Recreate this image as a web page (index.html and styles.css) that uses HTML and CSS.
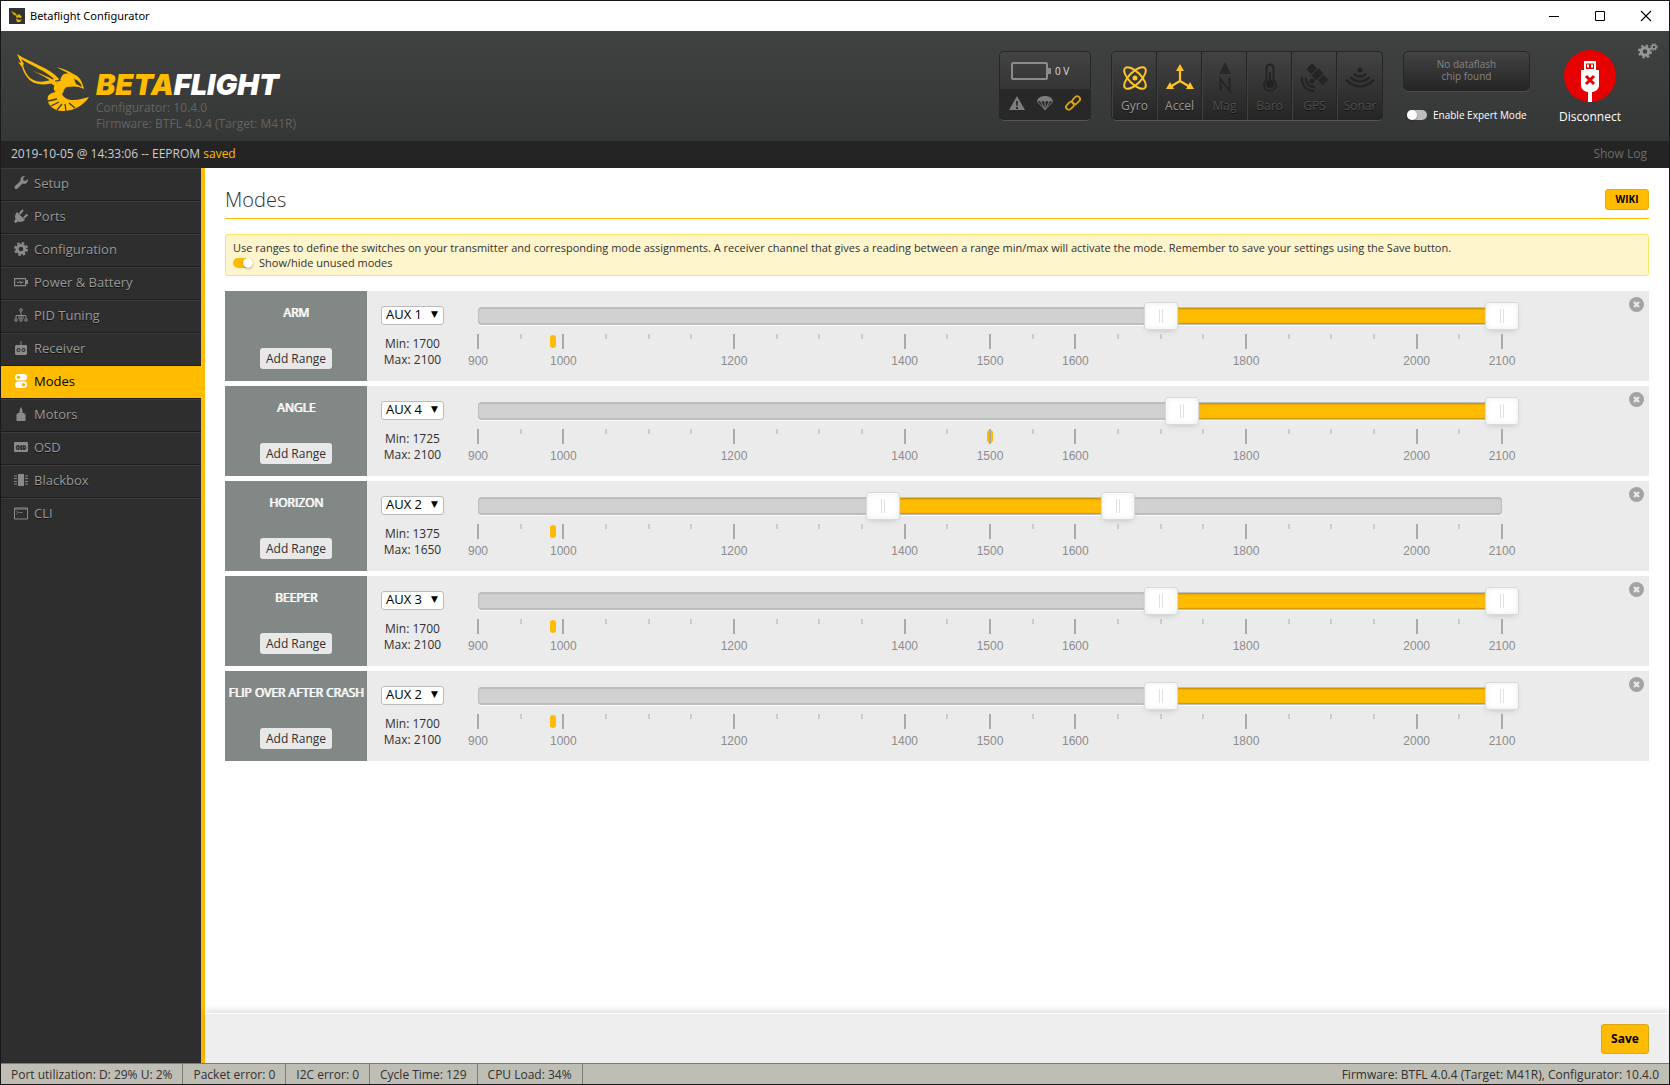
FILE: index.html
```html
<!DOCTYPE html>
<html lang="en">
<head>
<meta charset="utf-8">
<title>Betaflight Configurator</title>
<link rel="stylesheet" href="styles.css">
</head>
<body>
<div class="titlebar">
  <svg class="app-icon" viewBox="0 0 16 16"><rect width="16" height="16" fill="#333"/><path d="M2 3l3 4 4 1-3-3zM7 8l3-2 3 3-2 1-2-1-1 2zM7 11l4 1 2-1-2 3H8z" fill="#e8b410"/></svg>
  <span class="titlebar-name">Betaflight Configurator</span>
  <button class="win-btn" aria-label="Minimize"><svg viewBox="0 0 10 10"><path d="M0 5.500h10" stroke="#000"/></svg></button>
  <button class="win-btn" aria-label="Maximize"><svg viewBox="0 0 10 10"><path d="M.5.5h9v9h-9z" fill="none" stroke="#000"/></svg></button>
  <button class="win-btn" aria-label="Close"><svg viewBox="0 0 10 10"><path d="M0 0l10 10M10 0L0 10" stroke="#000" stroke-width="1.100"/></svg></button>
</div>

<header class="header">
  <div class="logo">
    <svg class="wasp" viewBox="0 0 72 58">
      <path fill-rule="evenodd" d="M0 0C12 8 33 14 42 25L38 32 34 29.500C22 32 14 29 10 23 7 19 6 16 5 13L1 8l3 1zM4 5l3 5-1 1C8 19 12 25 19 27c5 1.500 11 0 15-1l3-1C29 17 15 12 4 5z" fill="#ffbb00"/>
      <path d="M15 16c7 4 16 6 21 10l-2 1.500C28 22 21 20 15 16zM40 13c6 2 13 4 17 8l-5-1c-4-3-8-4-12-7z" fill="#ffbb00"/>
      <path d="M47 20c8-2 13 1 16 5 2 3 3 6 4 10-5-3-11-3-17-2-3 1-3 5-6 5-4 1-6 0-7-2-1-4 2-7 5-9 2-2 2-5 5-7z" fill="#ffbb00"/>
      <path d="M57 25c4 1 7 4 8 8l-6-3z" fill="#3b3d3c"/>
      <path d="M38 27l6-1" stroke="#3b3d3c"/>
      <path d="M31 42c3-4 10-5 16-5l-2 3c2 4 6 6 11 6 6 0 11-2 16-3C67 51 57 57 46 57 37 57 29 51 31 42z" fill="#ffbb00"/>
      <path d="M31 47l9-2M34 52l8-4M40 56l5-6M49 57l-1-7M58 54l-6-5" stroke="#393b3a" stroke-width="1.300"/>
    </svg>
    <div class="logo-text">
      <div class="brand"><span class="brand-beta">BETA</span>FLIGHT</div>
      <div class="version">Configurator: 10.4.0</div>
      <div class="version">Firmware: BTFL 4.0.4 (Target: M41R)</div>
    </div>
  </div>

  <div class="battery-box">
    <div class="battery-top"><span class="battery"></span><span>0 V</span></div>
    <div class="battery-bottom">
      <svg viewBox="0 0 16 16" fill="#7d7d7d"><path fill-rule="evenodd" d="M8 1l8 14H0zM7 6l.4 5h1.200L9 6zM7 12v2h2v-2z"/></svg>
      <svg viewBox="0 0 16 16" fill="#7d7d7d"><path d="M0 7c0-8 16-8 16 0l-2-1-2 1-2-1-2 1-2-1-2 1-2-1z"/><path d="M.5 7L8 14.500 15.500 7M4 7l4 8 4-8M8 7v7" fill="none" stroke="#7d7d7d"/></svg>
      <svg viewBox="0 0 16 16" fill="none" stroke="#d9a310" stroke-width="1.800"><rect x="6.500" y="2.500" width="9" height="5.600" rx="2.800" transform="rotate(-45 11 5.300)"/><rect x=".5" y="8" width="9" height="5.600" rx="2.800" transform="rotate(-45 5 10.800)"/></svg>
    </div>
  </div>

  <ul class="sensors">
    <li class="sensor on"><svg viewBox="0 0 28 28" fill="none" stroke="#ffc425" stroke-width="2"><ellipse cx="14" cy="14" rx="14" ry="6" transform="rotate(45 14 14)"/><ellipse cx="14" cy="14" rx="14" ry="6" transform="rotate(-45 14 14)"/><circle cx="14" cy="14" r="1.500" fill="#ffc425"/></svg>Gyro</li>
    <li class="sensor on"><svg viewBox="0 0 28 28"><path d="M14 5v12L4 23M14 17l10 6" fill="none" stroke="#ffc425" stroke-width="2.200"/><path d="M14 0l4 7h-8zM0 25l4-7 4 7zM28 25l-8 0 4-7z" fill="#ffc425"/></svg>Accel</li>
    <li class="sensor"><svg viewBox="0 0 28 28"><path d="M14-2l6 12H8z" fill="#282828"/><path d="M9.500 27V15L18.500 27V14" fill="none" stroke="#242424" stroke-width="2"/></svg>Mag</li>
    <li class="sensor"><svg viewBox="0 0 28 28"><path d="M10.500 16V4a3.500 3.500 0 0 1 7 0v12a6 6 0 1 1-7 0z" fill="none" stroke="#242424" stroke-width="2"/><circle cx="14" cy="20" r="4" fill="#222"/><path d="M14 8v10" stroke="#222" stroke-width="2"/></svg>Baro</li>
    <li class="sensor"><svg viewBox="0 0 28 28"><g transform="rotate(45 16 10)" fill="#242424"><rect x="5" y="6" width="7" height="8"/><rect x="13" y="5" width="7" height="10"/><rect x="21" y="6" width="7" height="8"/></g><path d="M5 14a8 8 0 0 0 9 9M1 13a12 12 0 0 0 12 14" fill="none" stroke="#222" stroke-width="2"/><circle cx="11" cy="17" r="2.500" fill="#222"/></svg>GPS</li>
    <li class="sensor"><svg viewBox="0 0 28 28"><circle cx="14" cy="6" r="2.500" fill="#242424"/><path d="M8 10q6 5 12 0M4 13q10 9 20 0M0 16q14 13 28 0" fill="none" stroke="#242424" stroke-width="2.400"/></svg>Sonar</li>
  </ul>

  <div class="flash-col">
    <div class="dataflash">No dataflash<br>chip found</div>
    <label class="expert"><input class="switch" type="checkbox">Enable Expert Mode</label>
  </div>

  <button class="connect">
    <svg viewBox="0 0 52 52"><circle cx="26" cy="26" r="26" fill="#e60000"/><path d="M20 11h12v9h3v15c0 4-3 6-6 7h-1v10h-4V42h-1c-3-1-6-3-6-7V20h3z" fill="#fff"/><path d="M22 13.500h8V19h-8z" fill="#e60000"/><path d="M23 14.500h2v3h-2zM27 14.500h2v3h-2z" fill="#fff"/><path d="M22 26l8 8M30 26l-8 8" stroke="#e60000" stroke-width="3"/></svg>
    Disconnect
  </button>
  <button class="options" aria-label="Options"><svg viewBox="0 0 20 16" fill="none" stroke="#979797"><circle cx="7" cy="8.500" r="3.800" stroke-width="3"/><circle cx="7" cy="8.500" r="6" stroke-width="2" stroke-dasharray="2.400 2.312"/><circle cx="16" cy="4" r="2" stroke-width="1.500"/><circle cx="16" cy="4" r="3.200" stroke-width="1.200" stroke-dasharray="1.300 1.213"/></svg></button>
</header>

<div class="log"><span>2019-10-05 @ 14:33:06 -- EEPROM <span class="saved">saved</span></span><a class="show-log" href="#">Show Log</a></div>

<div class="main">
  <nav class="sidebar">
    <a href="#"><svg viewBox="0 0 14 14"><path d="M14 3a4 4 0 0 1-5.500 4.500L3 13a2 2 0 0 1-2.500-2.500L6.500 5A4 4 0 0 1 11 0L9 2.500 9.500 4.500 11.500 5z"/></svg>Setup</a>
    <a href="#"><svg viewBox="0 0 14 14"><path d="M3 3l8 8c-2 2-5 2.500-7 1.500L1.500 14 0 12.500 1.500 10C.5 8 1 5 3 3z"/><path d="M5.500 5l3.500-4M9.500 9l4-3.500" stroke="#8a8a8a" stroke-width="2" fill="none"/></svg>Ports</a>
    <a href="#"><svg viewBox="0 0 14 14" fill="none" stroke="#8a8a8a"><circle cx="7" cy="7" r="3.800" stroke-width="3" fill="none"/><circle cx="7" cy="7" r="6" fill="none" stroke-width="2" stroke-dasharray="2.600 2.112"/></svg>Configuration</a>
    <a href="#"><svg viewBox="0 0 14 14"><path d="M.6 3.600h11v7h-11z" fill="none" stroke="#8a8a8a" stroke-width="1.200"/><path d="M12 5h2v4h-2z"/><path d="M3 7.500h2l1-1.500 1 2.500 1-1.500h1.500" fill="none" stroke="#8a8a8a"/></svg>Power &amp; Battery</a>
    <a href="#"><svg viewBox="0 0 14 14" stroke="#8a8a8a"><path d="M7 3v8M2 11V7.500h10V11M5 7.500v3.500M9 7.500V11" fill="none"/><circle cx="7" cy="2" r="1.300" fill="none"/><circle cx="2" cy="12" r="1.300" fill="none"/><circle cx="7" cy="12" r="1.300" fill="none"/><circle cx="12" cy="12" r="1.300" fill="none"/></svg>PID Tuning</a>
    <a href="#"><svg viewBox="0 0 14 14"><path fill-rule="evenodd" d="M6.500 0h1v4H12l1 1v8l-1 1H2l-1-1V5l1-1h4.500zM4.500 7a2 2 0 1 0 .01 0zM9.500 7a2 2 0 1 0 .01 0z"/><circle cx="4.500" cy="9" r="1"/><circle cx="9.500" cy="9" r="1"/></svg>Receiver</a>
    <a href="#" class="active" aria-current="page"><svg viewBox="0 0 14 14"><rect x="1" y="0" width="12" height="6.500" rx="3"/><rect x="1" y="7.500" width="12" height="6.500" rx="3"/><circle cx="4.500" cy="3.200" r="1.800" fill="#ffbb00"/><circle cx="9.500" cy="10.800" r="1.800" fill="#ffbb00"/></svg>Modes</a>
    <a href="#"><svg viewBox="0 0 14 14"><path d="M7 0l1.500 3v3H10l1.500 1.500V14h-9V7.500L4 6h1.500V3z"/></svg>Motors</a>
    <a href="#"><svg viewBox="0 0 14 14"><rect y="2" width="14" height="10" rx="1"/><text class="osd-text" x="7" y="9" text-anchor="middle">OSD</text></svg>OSD</a>
    <a href="#"><svg viewBox="0 0 14 14"><path d="M4 1h6v12H4z"/><path d="M0 3h3M0 5.500h3M0 8.500h3M0 11h3M11 3h3M11 5.500h3M11 8.500h3M11 11h3" stroke="#8a8a8a"/></svg>Blackbox</a>
    <a href="#"><svg viewBox="0 0 14 14"><path d="M.5 2h13v11H.5zM0 3h14" fill="none" stroke="#8a8a8a"/><path d="M2.500 5l2 1.500-2 1.500M5.500 6.500h3" fill="none" stroke="#8a8a8a" stroke-width=".8"/></svg>CLI</a>
  </nav>

  <main class="content">
    <div class="tab">
      <div class="tab-head"><h1>Modes</h1><a class="wiki" href="#">WIKI</a></div>
      <div class="note">
        <p>Use ranges to define the switches on your transmitter and corresponding mode assignments. A receiver channel that gives a reading between a range min/max will activate the mode. Remember to save your settings using the Save button.</p>
        <label class="unused"><input class="switch" type="checkbox" checked>Show/hide unused modes</label>
      </div>
      <div class="modes" id="modes"></div>
    </div>
    <div class="toolbar"><button class="save">Save</button></div>
  </main>
</div>

<footer class="status">
  <span>Port utilization: D: 29% U: 2%</span><span>Packet error: 0</span><span>I2C error: 0</span><span>Cycle Time: 129</span><span>CPU Load: 34%</span>
  <div class="status-right">Firmware: BTFL 4.0.4 (Target: M41R), Configurator: 10.4.0</div>
</footer>
<script src="modes.js"></script>
</body>
</html>
```
FILE: styles.css
```css
* { box-sizing: border-box; }
body {
  margin: 0;
  min-height: 100vh;
  display: flex;
  flex-direction: column;
  border: 1px solid #1b181c;
  font-family: "Open Sans", "Noto Sans", sans-serif;
  font-size: 12px;
  line-height: 16px;
  color: #303030;
  background: #fff;
}
button, select, input { font: inherit; margin: 0; }
button { border: 0; padding: 0; background: none; cursor: pointer; }
a { text-decoration: none; color: inherit; }
svg { display: block; overflow: visible; }

.titlebar { height: 30px; display: flex; align-items: center; padding-left: 8px; color: #000; }
.app-icon { width: 16px; height: 16px; margin-right: 5px; }
.titlebar-name { flex: 1; font-family: "Noto Sans", sans-serif; font-size: 11px; }
.win-btn { width: 46px; height: 28px; display: grid; place-items: center; }
.win-btn svg { width: 10px; height: 10px; }

.header {
  position: relative;
  height: 110px;
  display: flex;
  align-items: flex-start;
  padding: 20px 43px 0 16px;
  background: linear-gradient(#3f4241, #353736);
}
.logo { flex: 1; display: flex; gap: 7px; padding-top: 3px; }
.wasp { width: 72px; height: 58px; }
.logo-text { padding-top: 16px; }
.brand { font: italic 900 29px/30px "Inter", sans-serif; color: #fff; }
.brand-beta { color: #ffbb00; }
.version { font-size: 12px; line-height: 16px; color: #636363; }

.battery-box { width: 92px; height: 70px; margin-right: 20px; border: 1px solid #272727; border-bottom-color: #555; border-radius: 5px; background: #282828; overflow: hidden; }
.battery-top { height: 37px; display: flex; align-items: center; gap: 7px; padding: 1px 0 0 11px; background: linear-gradient(#434343, #353535); color: #ddd; font-size: 10px; }
.battery { position: relative; width: 37px; height: 18px; border: 2px solid #8c8c8c; border-radius: 2px; }
.battery::after { content: ""; position: absolute; right: -5px; top: 4px; width: 3px; height: 6px; background: #8c8c8c; }
.battery-bottom { display: flex; gap: 12px; padding: 6px 9px; }
.battery-bottom svg { width: 16px; height: 16px; }

.sensors { list-style: none; margin: 0 20px 0 0; padding: 0; display: flex; height: 70px; border: 1px solid #272727; border-bottom-color: #555; border-radius: 5px; overflow: hidden; background: linear-gradient(#434343, #252525); }
.sensor { width: 45px; display: flex; flex-direction: column; align-items: center; gap: 6px; padding-top: 12px; border-right: 1px solid #242424; border-left: 1px solid #414141; color: #4f4f4f; text-shadow: 0 1px #111; }
.sensor:last-child { border-right: 0; }
.sensor svg { width: 28px; height: 28px; }
.sensor.on { color: #999; }

.flash-col { width: 127px; margin-right: 24px; }
.dataflash { height: 40px; padding-top: 6px; border: 1px solid #272727; border-radius: 5px; background: linear-gradient(#434343, #252525); color: #858585; text-align: center; font-size: 10px; line-height: 12px; box-shadow: 0 1px #4a4a4a; }
.expert { display: flex; align-items: center; gap: 6px; margin-top: 16px; padding-left: 4px; color: #fff; font-size: 10px; white-space: nowrap; }
.switch { appearance: none; position: relative; width: 20px; height: 10px; border-radius: 5px; background: #bdbdbd; }
.switch::before { content: ""; position: absolute; left: 0; top: 0; width: 10px; height: 10px; border-radius: 50%; background: #fff; box-shadow: 0 1px 2px rgba(0, 0, 0, .3); }
.switch:checked { background: #ffbb00; }
.switch:checked::before { left: 10px; }
.connect { display: flex; flex-direction: column; align-items: center; gap: 7px; margin-top: -1px; color: #fff; font-size: 12px; line-height: 16px; width: 72px; }
.connect svg { width: 52px; height: 52px; }
.options { position: absolute; right: 11px; top: 12px; }
.options svg { width: 20px; height: 16px; }

.log { height: 27px; display: flex; justify-content: space-between; align-items: center; padding: 0 22px 2px 10px; background: #242424; color: #ccc; }
.saved { color: #ffbb00; }
.show-log { color: #6c6c6c; }

.main { flex: 1; display: flex; }
.sidebar { width: 204px; border-right: 4px solid #ffbb00; background: #2e2e2e; }
.sidebar a { display: flex; align-items: center; gap: 6px; height: 33px; padding-left: 13px; padding-bottom: 4px; border-top: 1px solid #3d3d3d; border-bottom: 1px solid #1c1c1c; color: #999; font-size: 13px; text-shadow: 0 1px #111; }
.sidebar a:last-child { height: 32px; border-bottom: 0; }
.sidebar svg { width: 14px; height: 14px; fill: #8a8a8a; }
.sidebar .active { background: #ffbb00; border-top-color: #ffbb00; color: #000; text-shadow: none; }
.sidebar .active svg { fill: #fff; }
.osd-text { font: bold 5px "Open Sans", sans-serif; fill: #2e2e2e; }

.content { flex: 1; min-width: 0; display: flex; flex-direction: column; }
.tab { flex: 1; padding: 20px 20px 0; }
.tab-head { display: flex; justify-content: space-between; align-items: flex-start; height: 31px; border-bottom: 1px solid #ffbb00; }
h1 { margin: 0; font-size: 20px; line-height: 24px; font-weight: 300; color: #303030; }
.wiki { margin-top: 1px; width: 44px; height: 21px; border-radius: 3px; background: #ffbb00; border: 1px solid #e8ac08; color: #000; font-size: 10px; font-weight: 700; line-height: 19px; text-align: center; }
.note { margin: 15px 0; padding: 5px 7px; height: 42px; border: 1px solid #ffe55f; border-radius: 3px; background: #fff5cc; font-size: 11px; line-height: 15px; }
.note p { margin: 0; }
.unused { display: flex; align-items: center; gap: 6px; }

.modes { display: flex; flex-direction: column; gap: 5px; }
.mode { display: flex; height: 90px; background: #ebebeb; }
.mode-side { width: 142px; display: flex; flex-direction: column; align-items: center; justify-content: space-between; padding: 14px 0 12px; background: #828885; }
.mode-name { color: #fff; font-size: 12px; line-height: 16px; white-space: nowrap; text-shadow: 1px 0 #fff; }
.add-range { width: 72px; height: 21px; border-radius: 3px; background: #e8e8e8; color: #303030; }
.channel { width: 111px; padding: 15px 0 0 14px; }
.select { position: relative; display: block; width: 63px; height: 19px; margin-bottom: 11px; }
.select::after { content: "▼"; position: absolute; right: 6px; top: 0; font: 9px/17px "DejaVu Sans", sans-serif; color: #000; pointer-events: none; }
.select select { appearance: none; display: block; width: 100%; height: 100%; padding: 0 0 2px 4px; border: 1px solid #bbb; border-radius: 3px; background: #fff; color: #000; font-size: 13px; line-height: 15px; }
.limits { width: 63px; text-align: center; white-space: nowrap; }

.slider { position: relative; flex: 1; margin: 16px 0 0; }
.track { height: 18px; border: 1px solid #bfbfbf; border-radius: 3px; background: #d1d1d1; box-shadow: inset 0 1px 1px #bbb, inset 0 -1px #bbb, 0 1px #fafafa; }
.fill { position: absolute; top: 1px; height: 16px; background: #ffbb00; box-shadow: inset 0 1px 2px #b98800, inset 0 -1px 1px #d09900; }
.slider input { appearance: none; position: absolute; left: -17px; top: -5px; width: calc(100% + 34px); height: 28px; background: none; pointer-events: none; }
.slider input::-webkit-slider-thumb { appearance: none; width: 34px; height: 28px; border: 1px solid #d9d9d9; border-radius: 3px; background: linear-gradient(#e1e1e1, #e1e1e1) 14px 6px / 1px 14px no-repeat, linear-gradient(#e1e1e1, #e1e1e1) 17px 6px / 1px 14px no-repeat, #fff; box-shadow: inset 0 0 6px #ededed, 0 3px 6px -3px #bbb; pointer-events: auto; }
.pip { position: absolute; top: 27px; width: 2px; height: 5px; margin-left: -1px; background: #ccc; }
.pip.large { height: 15px; background: #aaa; }
.pip-label { position: absolute; top: 46px; width: 40px; margin-left: -20px; text-align: center; font-family: "Liberation Sans", Arial, sans-serif; color: #8c8c8c; }
.marker { position: absolute; top: 28px; width: 6px; height: 13px; margin-left: -3px; border-radius: 3px; background: #ffbb00; }
.row-end { width: 147px; display: flex; justify-content: flex-end; align-items: flex-start; padding: 6px 5px 0 0; }
.row-end svg { width: 15px; height: 15px; }

.toolbar { display: flex; justify-content: flex-end; height: 50px; padding: 10px 20px 0; border-top: 1px solid #fff; background: #eee; box-shadow: 0 -3px 6px rgba(0, 0, 0, .12); }
.save { width: 48px; height: 30px; border: 1px solid #dba718; border-radius: 3px; background: #ffbb00; color: #000; font-weight: 700; font-size: 12px; }

.status { display: flex; height: 21px; border-top: 1px solid #7d7b76; background: #bfbeb5; line-height: 21px; white-space: nowrap; }
.status span { padding: 0 10px; border-right: 1px solid #7d7b76; }
.status-right { margin-left: auto; padding-right: 10px; }
```
FILE: modes.js
```js
const MIN = 900;
const MAX = 2100;
const LABELLED = [900, 1000, 1200, 1400, 1500, 1600, 1800, 2000, 2100];
const modes = [
  { name: "ARM", aux: 1, low: 1700, high: 2100, value: 988 },
  { name: "ANGLE", aux: 4, low: 1725, high: 2100, value: 1500 },
  { name: "HORIZON", aux: 2, low: 1375, high: 1650, value: 988 },
  { name: "BEEPER", aux: 3, low: 1700, high: 2100, value: 988 },
  { name: "FLIP OVER AFTER CRASH", aux: 2, low: 1700, high: 2100, value: 988 },
];
const pct = (v) => ((v - MIN) / (MAX - MIN)) * 100;

function scale() {
  let html = "";
  for (let v = MIN; v <= MAX; v += 50) {
    const large = LABELLED.includes(v);
    html += `<span class="pip${large ? " large" : ""}" style="left:${pct(v)}%"></span>`;
    if (large) html += `<span class="pip-label" style="left:${pct(v)}%">${v}</span>`;
  }
  return html;
}

function row(m) {
  const options = [1, 2, 3, 4]
    .map((n) => `<option${n === m.aux ? " selected" : ""}>AUX ${n}</option>`)
    .join("");
  return `<section class="mode">
    <div class="mode-side"><div class="mode-name">${m.name}</div><button class="add-range">Add Range</button></div>
    <div class="channel">
      <label class="select"><select aria-label="${m.name} channel">${options}</select></label>
      <div class="limits">Min: ${m.low}<br>Max: ${m.high}</div>
    </div>
    <div class="slider">
      <div class="track"></div>
      <div class="fill" style="left:${pct(m.low)}%;width:${pct(m.high) - pct(m.low)}%"></div>
      <span class="marker" style="left:${pct(m.value)}%"></span>
      ${scale()}
      <input type="range" min="900" max="2100" step="25" value="${m.low}" aria-label="${m.name} minimum">
      <input type="range" min="900" max="2100" step="25" value="${m.high}" aria-label="${m.name} maximum">
    </div>
    <div class="row-end"><button aria-label="Delete ${m.name} range"><svg viewBox="0 0 15 15"><circle cx="7.5" cy="7.5" r="7.5" fill="#a3a3a3"/><path d="M5 5l5 5M10 5l-5 5" stroke="#ebebeb" stroke-width="2.2"/></svg></button></div>
  </section>`;
}

document.getElementById("modes").innerHTML = modes.map(row).join("");
```
